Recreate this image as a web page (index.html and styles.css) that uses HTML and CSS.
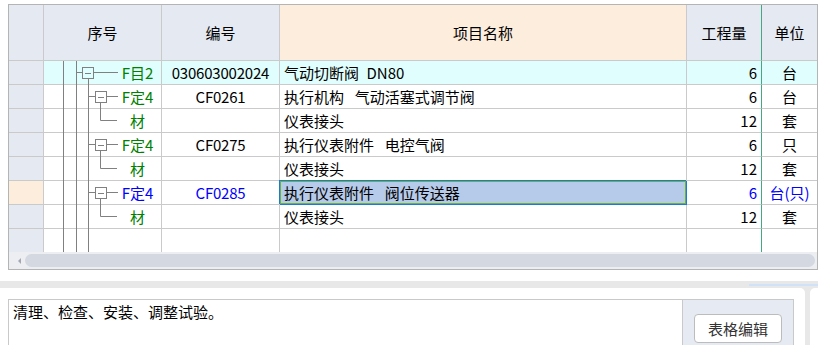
FILE: index.html
```html
<!DOCTYPE html>
<html lang="zh-CN">
<head>
    <meta charset="UTF-8">
    <title>清单项目</title>
    <link rel="stylesheet" href="styles.css">
</head>
<body>
    <div class="grid-box">
        <div class="grid">
            <div class="cell head"></div>
            <div class="cell head">序号</div>
            <div class="cell head">编号</div>
            <div class="cell head name-head">项目名称</div>
            <div class="cell head qty-col">工程量</div>
            <div class="cell head unit-col">单位</div>

            <div class="cell rowhead"></div>
            <div class="cell seq hl green">F目2</div>
            <div class="cell code hl">030603002024</div>
            <div class="cell name hl">气动切断阀&ensp;DN80</div>
            <div class="cell qty qty-col hl">6</div>
            <div class="cell unit unit-col hl">台</div>

            <div class="cell rowhead"></div>
            <div class="cell seq green">F定4</div>
            <div class="cell code">CF0261</div>
            <div class="cell name">执行机构&ensp; 气动活塞式调节阀</div>
            <div class="cell qty qty-col">6</div>
            <div class="cell unit unit-col">台</div>

            <div class="cell rowhead"></div>
            <div class="cell seq green">材</div>
            <div class="cell code"></div>
            <div class="cell name">仪表接头</div>
            <div class="cell qty qty-col">12</div>
            <div class="cell unit unit-col">套</div>

            <div class="cell rowhead"></div>
            <div class="cell seq green">F定4</div>
            <div class="cell code">CF0275</div>
            <div class="cell name">执行仪表附件&ensp; 电控气阀</div>
            <div class="cell qty qty-col">6</div>
            <div class="cell unit unit-col">只</div>

            <div class="cell rowhead"></div>
            <div class="cell seq green">材</div>
            <div class="cell code"></div>
            <div class="cell name">仪表接头</div>
            <div class="cell qty qty-col">12</div>
            <div class="cell unit unit-col">套</div>

            <div class="cell rowhead current"></div>
            <div class="cell seq blue">F定4</div>
            <div class="cell code blue">CF0285</div>
            <div class="cell name selected">执行仪表附件&ensp; 阀位传送器</div>
            <div class="cell qty qty-col blue">6</div>
            <div class="cell unit unit-col blue">台(只)</div>

            <div class="cell rowhead"></div>
            <div class="cell seq green">材</div>
            <div class="cell code"></div>
            <div class="cell name">仪表接头</div>
            <div class="cell qty qty-col">12</div>
            <div class="cell unit unit-col">套</div>

            <div class="cell rowhead filler"></div>
            <div class="cell filler"></div>
            <div class="cell filler"></div>
            <div class="cell filler"></div>
            <div class="cell filler qty-col"></div>
            <div class="cell filler unit-col"></div>

            <!-- tree connectors over the 序号 column -->
            <svg class="tree" width="117" height="191" viewBox="0 0 117 191">
                <g stroke="#808080" stroke-width="1" fill="none">
                    <line x1="19.5" y1="0" x2="19.5" y2="191"/>
                    <line x1="32.5" y1="0" x2="32.5" y2="191"/>
                    <line x1="44.5" y1="17" x2="44.5" y2="191"/>

                    <line x1="32.5" y1="11.5" x2="38" y2="11.5"/>
                    <rect x="38.5" y="6.5" width="11" height="11" fill="#e0fefd"/>
                    <line x1="41" y1="12.5" x2="47" y2="12.5"/>
                    <line x1="50" y1="11.5" x2="74" y2="11.5"/>

                    <line x1="44.5" y1="35.5" x2="51" y2="35.5"/>
                    <rect x="51.5" y="30.5" width="11" height="11" fill="#fff"/>
                    <line x1="54" y1="36.5" x2="60" y2="36.5"/>
                    <line x1="63" y1="35.5" x2="74" y2="35.5"/>
                    <polyline points="56.5,42 56.5,59.5 73,59.5"/>

                    <line x1="44.5" y1="83.5" x2="51" y2="83.5"/>
                    <rect x="51.5" y="78.5" width="11" height="11" fill="#fff"/>
                    <line x1="54" y1="84.5" x2="60" y2="84.5"/>
                    <line x1="63" y1="83.5" x2="74" y2="83.5"/>
                    <polyline points="56.5,90 56.5,107.5 73,107.5"/>

                    <line x1="44.5" y1="131.5" x2="51" y2="131.5"/>
                    <rect x="51.5" y="126.5" width="11" height="11" fill="#fff"/>
                    <line x1="54" y1="132.5" x2="60" y2="132.5"/>
                    <line x1="63" y1="131.5" x2="74" y2="131.5"/>
                    <polyline points="56.5,138 56.5,155.5 73,155.5"/>
                </g>
            </svg>
        </div>
        <div class="hscroll">
            <span class="arrow"></span>
            <span class="thumb"></span>
        </div>
    </div>

    <div class="split"></div>
    <div class="lower">
        <div class="lower-main">
            <div class="desc">
                <div class="desc-text">清理、检查、安装、调整试验。</div>
                <div class="desc-side">
                    <button class="btn">表格编辑</button>
                </div>
            </div>
        </div>
        <div class="lower-next"></div>
    </div>
</body>
</html>
```

FILE: styles.css
```css
body {
    margin: 0;
    font-family: "Noto Sans CJK SC", sans-serif;
    font-size: 15px;
    color: #000;
    background: #fff;
    width: 818px;
    height: 345px;
    overflow: hidden;
}
.grid-box {
    margin: 4px 0 0 8px;
    width: 810px;
    border: 1px solid #b4b4b4;
    box-sizing: border-box;
}
.grid {
    position: relative;
    display: grid;
    grid-template-columns: 35px 118px 118px 407px 75px 55px;
    grid-template-rows: 56px repeat(7, 24px) 23px;
}
.cell {
    box-sizing: border-box;
    border-right: 1px solid #cacaca;
    border-bottom: 1px solid #cacaca;
    line-height: 23px;
    white-space: nowrap;
    overflow: hidden;
}
.head {
    background: #e4e9f2;
    display: flex;
    align-items: center;
    justify-content: center;
}
.name-head {
    background: #fdeddd;
}
.rowhead {
    background: #e4e9f2;
}
.rowhead.current {
    background: #fdeddd;
}
.qty-col {
    border-right-color: #43a883;
}
.unit-col {
    border-right: none;
}
.filler {
    border-bottom: none;
}
.hl {
    background: #e0fefd;
}
.seq {
    padding: 0 4px 0 74px;
    text-align: center;
}
.code {
    text-align: center;
    letter-spacing: -0.2px;
}
.name {
    padding-left: 4px;
}
.qty {
    padding-right: 4px;
    text-align: right;
}
.unit {
    text-align: center;
}
.green {
    color: #008000;
}
.blue {
    color: #0000ff;
}
.selected {
    background: #b6cae9;
    border-right-color: #1f78d1;
    border-bottom-color: #1f78d1;
    box-shadow: -1px -1px 0 0 #1f78d1, inset 0 0 0 1px #6cb344;
}
.tree {
    position: absolute;
    left: 35px;
    top: 56px;
    pointer-events: none;
}
.hscroll {
    height: 17px;
    background: #eceef2;
    display: flex;
    align-items: center;
    padding: 0 2px 0 9px;
}
.arrow {
    width: 0;
    height: 0;
    border-top: 3px solid transparent;
    border-bottom: 3px solid transparent;
    border-right: 3px solid #a3a8b0;
}
.thumb {
    flex: 1;
    height: 13px;
    margin-left: 4px;
    border-radius: 7px;
    background: #d4d8e0;
}
.split {
    margin-top: 11px;
    height: 7px;
    background: linear-gradient(#cfe2f7, #cfe2f7) right 3px / 69px 2px no-repeat, #e8e8e8;
}
.lower {
    display: flex;
    height: 57px;
    background: #e8e8e8;
}
.lower-main {
    width: 805px;
    background: #fff;
    border-top-right-radius: 5px;
    padding: 11px 0 0 8px;
    box-sizing: border-box;
}
.lower-next {
    flex: 1;
    margin-left: 5px;
    background: #fff;
    border-top-left-radius: 5px;
}
.desc {
    width: 786px;
    height: 60px;
    border: 1px solid #c9c9c9;
    box-sizing: border-box;
    display: flex;
}
.desc-text {
    flex: 1;
    padding: 2px 4px;
    line-height: 20px;
}
.desc-side {
    width: 111px;
    background: #e6eaf2;
    border-left: 1px solid #c9c9c9;
    box-sizing: border-box;
    padding: 14px 0 0 11px;
}
.btn {
    width: 88px;
    height: 29px;
    border: 1px solid #bcbcbc;
    border-radius: 4px;
    background: #fff;
    color: #333;
    font-family: "Noto Sans CJK SC", sans-serif;
    font-size: 15px;
    padding: 0;
}
```
